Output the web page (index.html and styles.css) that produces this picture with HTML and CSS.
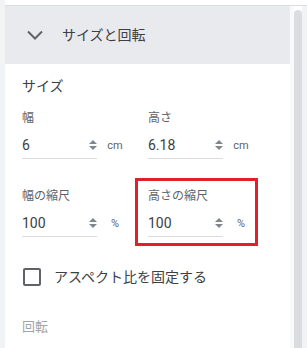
FILE: index.html
```html
<!DOCTYPE html>
<html lang="ja">
<head>
    <meta charset="UTF-8">
    <meta name="viewport" content="width=device-width, initial-scale=1.0">
    <title>サイズと回転</title>
    <link rel="stylesheet" href="styles.css">
</head>
<body>
    <div class="rail"></div>
    <div class="frame">
        <div class="topbar"></div>
        <div class="body-row">
            <div class="panel">
                <div class="panel-header">
                    <svg class="chevron" width="16" height="10" viewBox="0 0 16 10">
                        <polyline points="1,1.5 8,8.5 15,1.5" fill="none" stroke="#5f6368" stroke-width="2"/>
                    </svg>
                    <span class="panel-title">サイズと回転</span>
                </div>
                <div class="panel-content">
                    <div class="section-title">サイズ</div>
                    <div class="fields">
                        <div class="field">
                            <div class="field-label">幅</div>
                            <div class="field-row">
                                <div class="field-input">
                                    <span class="field-value">6</span>
                                    <svg class="spinner" width="8" height="12" viewBox="0 0 8 12">
                                        <polygon points="0,5 4,1 8,5" fill="#80868b"/>
                                        <polygon points="0,7 4,11 8,7" fill="#80868b"/>
                                    </svg>
                                </div>
                                <span class="field-unit">cm</span>
                            </div>
                        </div>
                        <div class="field">
                            <div class="field-label">高さ</div>
                            <div class="field-row">
                                <div class="field-input">
                                    <span class="field-value">6.18</span>
                                    <svg class="spinner" width="8" height="12" viewBox="0 0 8 12">
                                        <polygon points="0,5 4,1 8,5" fill="#80868b"/>
                                        <polygon points="0,7 4,11 8,7" fill="#80868b"/>
                                    </svg>
                                </div>
                                <span class="field-unit">cm</span>
                            </div>
                        </div>
                        <div class="field">
                            <div class="field-label">幅の縮尺</div>
                            <div class="field-row">
                                <div class="field-input">
                                    <span class="field-value">100</span>
                                    <svg class="spinner" width="8" height="12" viewBox="0 0 8 12">
                                        <polygon points="0,5 4,1 8,5" fill="#80868b"/>
                                        <polygon points="0,7 4,11 8,7" fill="#80868b"/>
                                    </svg>
                                </div>
                                <span class="field-unit">%</span>
                            </div>
                        </div>
                        <div class="field highlighted">
                            <div class="field-label">高さの縮尺</div>
                            <div class="field-row">
                                <div class="field-input">
                                    <span class="field-value">100</span>
                                    <svg class="spinner" width="8" height="12" viewBox="0 0 8 12">
                                        <polygon points="0,5 4,1 8,5" fill="#80868b"/>
                                        <polygon points="0,7 4,11 8,7" fill="#80868b"/>
                                    </svg>
                                </div>
                                <span class="field-unit">%</span>
                            </div>
                        </div>
                    </div>
                    <label class="checkbox-row">
                        <span class="checkbox"></span>
                        <span class="checkbox-label">アスペクト比を固定する</span>
                    </label>
                    <div class="section-title muted">回転</div>
                </div>
            </div>
            <div class="scrollbar">
                <div class="scrollbar-thumb"></div>
            </div>
        </div>
    </div>
</body>
</html>
```

FILE: styles.css
```css
html, body {
    margin: 0;
    height: 100%;
}
body {
    display: flex;
    overflow: hidden;
    font-family: Roboto, "Noto Sans CJK JP", sans-serif;
    background-color: #ffffff;
    color: #3c4043;
}
.rail {
    width: 5px;
    flex-shrink: 0;
    background-color: #f1f3f4;
}
.frame {
    flex: 1;
    display: flex;
    flex-direction: column;
    min-width: 0;
}
.topbar {
    height: 5px;
    flex-shrink: 0;
    background-color: #ffffff;
    border-bottom: 1px solid #dadce0;
}
.body-row {
    flex: 1;
    display: flex;
    min-height: 0;
}
.panel {
    flex: 1;
    background-color: #ffffff;
}
.panel-header {
    height: 58px;
    display: flex;
    align-items: center;
    padding-left: 22px;
    background-color: #e8eaed;
}
.chevron {
    display: block;
    margin-right: 19px;
}
.panel-title {
    font-size: 14px;
    line-height: 20px;
    color: #3c4043;
}
.panel-content {
    padding: 12px 0 0 17px;
}
.section-title {
    font-size: 14px;
    line-height: 20px;
    color: #3c4043;
}
.section-title.muted {
    font-size: 13px;
    line-height: 18px;
    color: #a0a4a8;
}
.fields {
    display: grid;
    grid-template-columns: repeat(2, 105px);
    column-gap: 21px;
    row-gap: 29px;
    margin-top: 14px;
}
.field {
    position: relative;
}
.field.highlighted::after {
    content: "";
    position: absolute;
    left: -13px;
    top: -10px;
    width: 123px;
    height: 68px;
    box-sizing: border-box;
    border: 3px solid #e3202a;
}
.field-label {
    font-size: 12px;
    line-height: 16px;
    color: #5f6368;
    margin-bottom: 6px;
}
.field-row {
    display: flex;
    align-items: center;
}
.field-input {
    width: 75px;
    display: flex;
    align-items: center;
    justify-content: space-between;
    padding: 3px 0;
    border-bottom: 1px solid #dadce0;
}
.field-value {
    font-size: 14px;
    line-height: 20px;
    color: #3c4043;
}
.spinner {
    display: block;
}
.field-unit {
    width: 24px;
    margin-left: 6px;
    text-align: center;
    font-size: 11px;
    color: #5f6368;
}
.checkbox-row {
    display: flex;
    align-items: center;
    margin-top: 31px;
    padding-left: 1px;
}
.checkbox {
    width: 18px;
    height: 18px;
    box-sizing: border-box;
    border: 2px solid #5f6368;
    border-radius: 2px;
    margin-right: 13px;
}
.checkbox-label {
    font-size: 14px;
    line-height: 18px;
    color: #3c4043;
}
.checkbox-row + .section-title {
    margin-top: 32px;
}
.scrollbar {
    width: 17px;
    flex-shrink: 0;
    display: flex;
    padding-top: 4px;
    box-sizing: border-box;
    background: linear-gradient(to right, #f8f9fa 4px, transparent 4px, transparent 12px, #f1f3f4 12px);
}
.scrollbar-thumb {
    width: 8px;
    margin-left: 4px;
    background-color: #dadce0;
    border-radius: 4px 4px 0 0;
}
```
